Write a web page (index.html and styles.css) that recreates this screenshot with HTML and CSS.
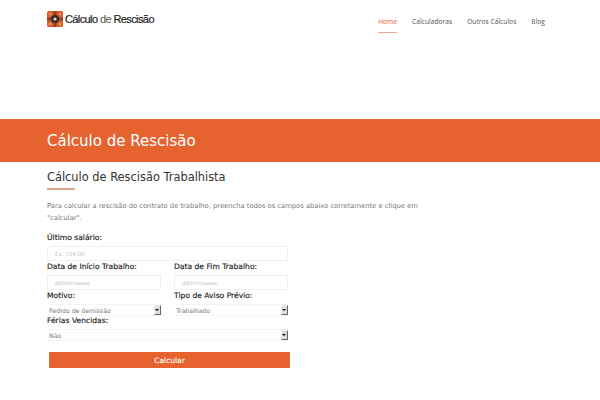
FILE: index.html
```html
<!DOCTYPE html>
<html lang="pt">
<head>
<meta charset="utf-8">
<title>Cálculo de Rescisão</title>
<link rel="stylesheet" href="styles.css">
</head>
<body>
<header class="topbar">
  <a class="logo" href="#">
    <svg class="logo-icon" width="16" height="16" viewBox="0 0 16 16" aria-hidden="true">
      <rect width="16" height="16" rx="1.5" fill="#dc5f2d"/>
      <path d="M0 6.5h16v3H0zM6.5 0h3v16h-3z" fill="#8e4424"/>
      <circle cx="8" cy="8" r="4" fill="#3a2a22"/>
      <circle cx="8" cy="8" r="1.6" fill="#f1d9c8"/>
      <circle cx="3" cy="3" r="1" fill="#f5b08a"/>
      <circle cx="13" cy="3" r="1" fill="#f5b08a"/>
      <circle cx="3" cy="13" r="1" fill="#f5b08a"/>
      <circle cx="13" cy="13" r="1" fill="#f5b08a"/>
    </svg>
    <span class="logo-text">Cálculo <span class="logo-light">de</span> Rescisão</span>
  </a>
  <nav class="nav">
    <a class="nav-link active" href="#">Home</a>
    <a class="nav-link" href="#">Calculadoras</a>
    <a class="nav-link" href="#">Outros Cálculos</a>
    <a class="nav-link" href="#">Blog</a>
  </nav>
</header>
<section class="banner"><h1>Cálculo de Rescisão</h1></section>
<main class="content">
  <h2>Cálculo de Rescisão Trabalhista</h2>
  <div class="rule"></div>
  <p class="intro">Para calcular a rescisão do contrato de trabalho, preencha todos os campos abaixo corretamente e clique em "calcular".</p>
  <form class="form">
    <label class="field">Último salário:
      <input type="text" placeholder="Ex. 724,00">
    </label>
    <div class="row">
      <label class="field">Data de Início Trabalho:
        <input type="text" placeholder="dd/mm/aaaa">
      </label>
      <label class="field">Data de Fim Trabalho:
        <input type="text" placeholder="dd/mm/aaaa">
      </label>
    </div>
    <div class="row">
      <label class="field">Motivo:
        <span class="select">Pedido de demissão<span class="arrow"></span></span>
      </label>
      <label class="field">Tipo de Aviso Prévio:
        <span class="select">Trabalhado<span class="arrow"></span></span>
      </label>
    </div>
    <label class="field">Férias Vencidas:
      <span class="select">Não<span class="arrow"></span></span>
    </label>
    <button type="button" class="submit">Calcular</button>
  </form>
</main>
</body>
</html>
```
FILE: styles.css
```css
* { box-sizing: border-box; }
html, body { margin: 0; padding: 0; }
body {
  width: 600px;
  height: 400px;
  overflow: hidden;
  background: #fff;
  font-family: "DejaVu Sans", sans-serif;
  color: #333;
}
a { text-decoration: none; color: inherit; }
.topbar {
  height: 119px;
  padding: 0 55px 0 47px;
  display: flex;
  justify-content: space-between;
  align-items: flex-start;
}
.logo { display: flex; align-items: center; gap: 2px; margin-top: 11px; }
.logo-icon { flex: none; }
.logo-text {
  font-family: "Liberation Sans", sans-serif;
  font-size: 11px;
  letter-spacing: -0.6px;
  color: #222;
  -webkit-text-stroke: 0.2px #222;
}
.logo-light { color: #555; -webkit-text-stroke: 0; }
.nav { display: flex; gap: 15px; }
.nav-link {
  font-family: "Open Sans", sans-serif;
  font-size: 6.7px;
  line-height: 10px;
  height: 33px;
  color: #555;
  padding-top: 17px;
  border-bottom: 1px solid transparent;
  width: max-content;
}
.nav-link.active { color: #e4632f; border-bottom-color: #e8a98e; }
.banner {
  height: 43px;
  background: #e6632f;
  padding: 0 47px;
  display: flex;
  align-items: center;
}
.banner h1 { margin: 0; font-weight: 400; font-size: 15px; color: #fff; }
.content { padding: 7px 47px 0; }
h2 { margin: 0; font-weight: 400; font-size: 11.4px; line-height: 16px; color: #333; }
.rule { width: 28px; height: 2px; background: #dca58f; margin-top: 3px; }
.intro { margin: 10px 0 0; width: 380px; font-size: 6.75px; line-height: 12px; color: #777; }
.form { margin-top: 9px; width: 241px; display: flex; flex-direction: column; }
.field { display: block; flex: 1; font-size: 7.6px; line-height: 10px; color: #222; -webkit-text-stroke: 0.15px #222; }
.field input {
  display: block;
  width: 100%;
  height: 15px;
  margin: 3px 0 1px;
  padding: 0 7px;
  border: 1px solid #f0f0f0;
  background: #fff;
  font: 5.5px "DejaVu Sans", sans-serif;
  -webkit-text-stroke: 0;
}
.field input::placeholder { color: #c4c4c4; }
.row { display: flex; gap: 13px; }
.select {
  position: relative;
  display: block;
  height: 12px;
  margin-top: 3px;
  padding-left: 2px;
  font-size: 6.2px;
  font-weight: 400;
  line-height: 11px;
  color: #777;
  -webkit-text-stroke: 0;
  border: 1px solid #f4f4f4;
  border-width: 1px 0;
}
.arrow {
  position: absolute;
  right: 0;
  top: 0;
  width: 7px;
  height: 10px;
  background: #ddd;
  border: 1px solid #999;
  border-color: #eee #666 #666 #eee;
}
.arrow::after {
  content: "";
  position: absolute;
  left: 0;
  top: 3px;
  border: 2px solid transparent;
  border-top: 2px solid #111;
  border-bottom: 0;
}
.submit {
  margin: 11px 0 0 2px;
  flex: none;
  width: 241px;
  height: 16px;
  border: 0;
  border-radius: 1px;
  background: #e6632f;
  color: #fff;
  font: 7.5px "DejaVu Sans", sans-serif;
  -webkit-text-stroke: 0.1px #fff;
}
```
